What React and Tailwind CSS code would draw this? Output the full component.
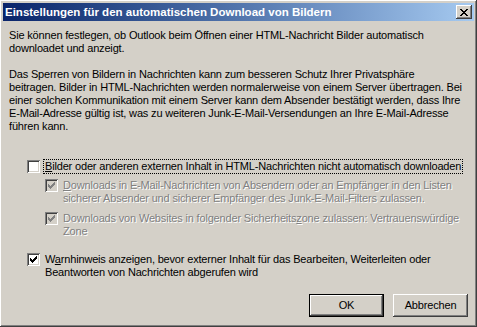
import React from 'react';

const raised =
  'shadow-[inset_-1px_-1px_#404040,inset_1px_1px_#ffffff,inset_-2px_-2px_#808080,inset_2px_2px_#d4d0c8]';

const Check = ({ checked, disabled }) => (
  <span
    className={`relative inline-block w-[13px] h-[13px] shrink-0 shadow-[inset_1px_1px_#808080,inset_-1px_-1px_#ffffff,inset_2px_2px_#404040,inset_-2px_-2px_#d4d0c8] ${
      disabled ? 'bg-[#d4d0c8]' : 'bg-white'
    }`}
  >
    {checked && (
      <svg width="13" height="13" viewBox="0 0 13 13" className="absolute left-0 top-0">
        <path
          d="M3 5h1v1h1v1h1V6h1V5h1V4h1V3h1v3H9v1H8v1H7v1H6v1H5V9H4V8H3z"
          fill={disabled ? '#808080' : '#000000'}
        />
      </svg>
    )}
  </span>
);

const Dis = ({ children }) => (
  <span className="whitespace-nowrap text-[#808080] [text-shadow:1px_1px_0_#ffffff]">{children}</span>
);

const Btn = ({ children, isDefault }) => (
  <button
    className={`w-[75px] h-[23px] bg-[#d4d0c8] text-black ${
      isDefault
        ? 'border border-black shadow-[inset_-1px_-1px_#404040,inset_1px_1px_#ffffff,inset_-2px_-2px_#808080]'
        : raised
    }`}
  >
    {children}
  </button>
);

export default function App() {
  return (
    <div
      className={`w-[477px] h-[327px] overflow-hidden bg-[#d4d0c8] p-[3px] flex flex-col text-[11px] leading-[13px] tracking-[-0.17px] text-black ${raised}`}
      style={{ fontFamily: '"Liberation Sans", Arial, sans-serif' }}
    >
      <div className="h-[18px] shrink-0 flex items-center justify-between pl-[2px] pr-[2px] bg-gradient-to-r from-[#0a246a] to-[#a6caf0]">
        <span className="font-bold text-white text-[11.5px] tracking-normal whitespace-nowrap">
          Einstellungen für den automatischen Download von Bildern
        </span>
        <span
          className={`w-[16px] h-[14px] flex items-center justify-center bg-[#d4d0c8] ${raised}`}
        >
          <svg width="8" height="7" viewBox="0 0 8 7">
            <path
              d="M0 0h2v1h1v1h2V1h1V0h2v1H7v1H6v1H5v1h1v1h1v1h1v1H6V6H5V5H3v1H2v1H0V6h1V5h1V4h1V3H2V2H1V1H0z"
              fill="#000"
            />
          </svg>
        </span>
      </div>

      <div className="flex-1 flex flex-col px-[6px] pt-[8px]">
        <p className="whitespace-nowrap">
          Sie können festlegen, ob Outlook beim Öffnen einer HTML-Nachricht Bilder automatisch
          <br />
          downloadet und anzeigt.
        </p>
        <p className="mt-[13px] whitespace-nowrap">
          Das Sperren von Bildern in Nachrichten kann zum besseren Schutz Ihrer Privatsphäre
          <br />
          beitragen. Bilder in HTML-Nachrichten werden normalerweise von einem Server übertragen. Bei
          <br />
          einer solchen Kommunikation mit einem Server kann dem Absender bestätigt werden, dass Ihre
          <br />
          E-Mail-Adresse gültig ist, was zu weiteren Junk-E-Mail-Versendungen an Ihre E-Mail-Adresse
          <br />
          führen kann.
        </p>

        <div className="mt-[27px] ml-[18px] flex items-center gap-[4px]">
          <Check />
          <span className="outline-1 outline-dotted outline-black px-[1px] whitespace-nowrap">
            <u>B</u>ilder oder anderen externen Inhalt in HTML-Nachrichten nicht automatisch downloaden
          </span>
        </div>

        <div className="mt-[6px] ml-[36px] flex items-start gap-[5px]">
          <Check checked disabled />
          <Dis>
            <u>D</u>ownloads in E-Mail-Nachrichten von Absendern oder an Empfänger in den Listen
            <br />
            sicherer Absender und sicherer Empfänger des Junk-E-Mail-Filters zulassen.
          </Dis>
        </div>

        <div className="mt-[7px] ml-[36px] flex items-start gap-[5px]">
          <Check checked disabled />
          <Dis>
            Downloads von Websites in folgender Sicherheits<u>z</u>one zulassen: Vertrauenswürdige
            <br />
            Zone
          </Dis>
        </div>

        <div className="mt-[15px] ml-[18px] flex items-start gap-[5px]">
          <Check checked />
          <span className="whitespace-nowrap">
            W<u>a</u>rnhinweis anzeigen, bevor externer Inhalt für das Bearbeiten, Weiterleiten oder
            <br />
            Beantworten von Nachrichten abgerufen wird
          </span>
        </div>

        <div className="mt-auto mb-[7px] flex justify-end gap-[9px]">
          <Btn isDefault>OK</Btn>
          <Btn>Abbrechen</Btn>
        </div>
      </div>
    </div>
  );
}
